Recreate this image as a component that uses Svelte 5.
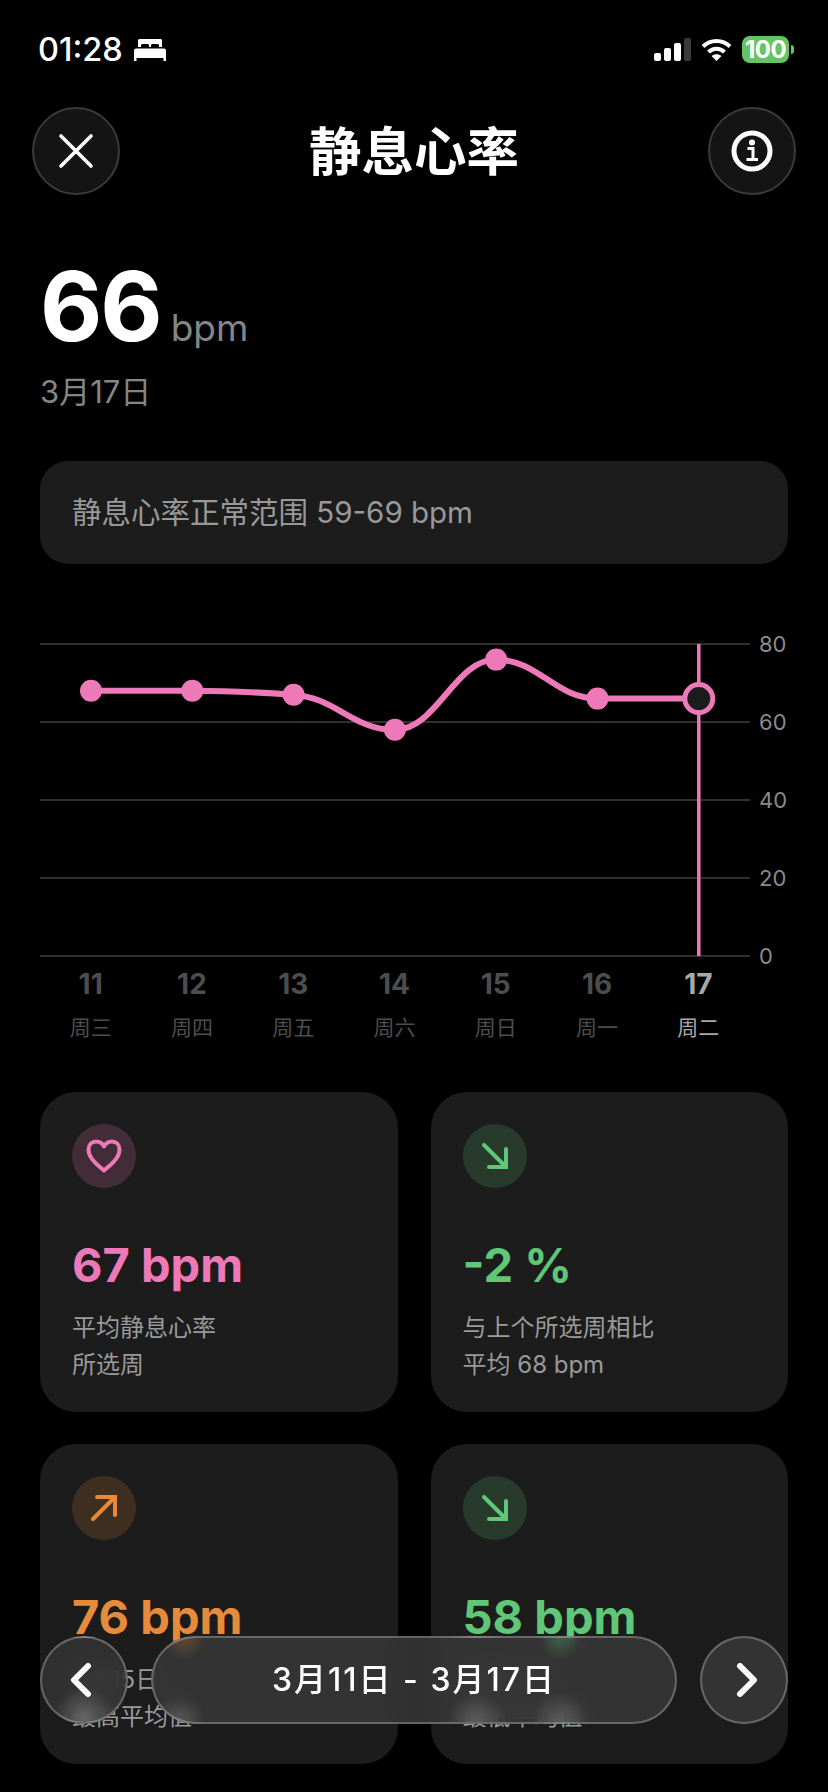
<script>
  const days = [
    { num: 11, week: '周三', bpm: 68 },
    { num: 12, week: '周四', bpm: 68 },
    { num: 13, week: '周五', bpm: 67 },
    { num: 14, week: '周六', bpm: 58 },
    { num: 15, week: '周日', bpm: 76 },
    { num: 16, week: '周一', bpm: 66 },
    { num: 17, week: '周二', bpm: 66 }
  ];
  const ticks = [80, 60, 40, 20, 0];

  const stepX = 101.3;
  const toY = (v) => 328 - v * 3.9;
  const points = days.map((d, i) => ({ x: 51 + i * stepX, y: toY(d.bpm) }));

  // monotone cubic so the line never overshoots the dots
  function smooth(pts) {
    const n = pts.length;
    const slopes = [];
    for (let i = 0; i < n - 1; i++) slopes.push((pts[i + 1].y - pts[i].y) / (pts[i + 1].x - pts[i].x));
    const tang = pts.map((_, i) => {
      if (i === 0) return slopes[0];
      if (i === n - 1) return slopes[n - 2];
      if (slopes[i - 1] * slopes[i] <= 0) return 0;
      return (2 * slopes[i - 1] * slopes[i]) / (slopes[i - 1] + slopes[i]);
    });
    let d = `M${pts[0].x} ${pts[0].y}`;
    for (let i = 0; i < n - 1; i++) {
      const h = (pts[i + 1].x - pts[i].x) / 2.4;
      d += ` C${pts[i].x + h} ${pts[i].y + tang[i] * h} ${pts[i + 1].x - h} ${pts[i + 1].y - tang[i + 1] * h} ${pts[i + 1].x} ${pts[i + 1].y}`;
    }
    return d;
  }
  const linePath = smooth(points);
  const last = points[points.length - 1];

  const cards = [
    { tone: 'pink', icon: 'heart', value: '67 bpm', lines: ['平均静息心率', '所选周'] },
    { tone: 'green', icon: 'down', value: '-2 %', lines: ['与上个所选周相比', '平均 68 bpm'] },
    { tone: 'orange', icon: 'up', value: '76 bpm', lines: ['3月15日', '最高平均值'] },
    { tone: 'green', icon: 'down', value: '58 bpm', lines: ['3月14日', '最低平均值'] }
  ];
</script>

<div class="screen">
  <div class="status">
    <div class="status-left">
      <span class="time">01:28</span>
      <svg width="32" height="22" viewBox="0 0 32 22" fill="#fff">
        <path d="M4 1.5C4 .7 4.7 0 5.5 0h21c.8 0 1.5.7 1.5 1.500V8h-3V6.500C25 5.700 24.300 5 23.500 5h-5c-.8 0-1.500.7-1.500 1.500V8h-2V6.500C15 5.700 14.300 5 13.500 5h-5C7.700 5 7 5.700 7 6.500V8H4z" />
        <path d="M2 9.500h28c1.100 0 2 .9 2 2V22h-2.500v-3h-27v3H0V11.500c0-1.100.9-2 2-2z" />
      </svg>
    </div>
    <div class="status-right">
      <svg width="37" height="23" viewBox="0 0 37 23" fill="#fff">
        <rect x="0" y="15" width="7" height="8" rx="2" />
        <rect x="10" y="10" width="7" height="13" rx="2" />
        <rect x="20" y="5" width="7" height="18" rx="2" />
        <rect x="30" y="0" width="7" height="23" rx="2" fill="#3a3a3a" />
      </svg>
      <svg width="31" height="23" viewBox="0 0 31 23" fill="none" stroke="#fff" stroke-width="4">
        <path d="M2 8.500C9.500 1 21.500 1 29 8.500" />
        <path d="M7.500 14C12 9.500 19 9.500 23.500 14" />
        <path d="M15.500 23L10.500 18C13.500 15.500 17.500 15.500 20.500 18z" fill="#fff" stroke="none" />
      </svg>
      <div class="battery">
        <span class="battery-body">100</span>
        <span class="battery-nub"></span>
      </div>
    </div>
  </div>

  <header class="top">
    <button class="round" aria-label="关闭">
      <svg width="36" height="36" viewBox="0 0 36 36" fill="none" stroke="#fff" stroke-width="3.600" stroke-linecap="round">
        <path d="M3 3L33 33M33 3L3 33" />
      </svg>
    </button>
    <h1>静息心率</h1>
    <button class="round" aria-label="信息">
      <svg width="42" height="42" viewBox="0 0 42 42" fill="none">
        <circle cx="21" cy="21" r="18" stroke="#fff" stroke-width="5" />
        <circle cx="21" cy="12.500" r="3" fill="#fff" />
        <path d="M16.500 18.500H22V29M15.500 29.500H27" stroke="#fff" stroke-width="3" />
      </svg>
    </button>
  </header>

  <section class="summary">
    <div class="reading"><span class="big">66</span><span class="unit">bpm</span></div>
    <div class="date">3月17日</div>
  </section>

  <div class="notice">静息心率正常范围 59-69 bpm</div>

  <section class="chart">
    <svg class="plot" width="788" height="340" viewBox="0 0 788 340">
      {#each ticks as t}
        <line x1="0" x2="710" y1={toY(t)} y2={toY(t)} stroke="#2f2f2f" stroke-width="2" />
        <text x="719" y={toY(t) + 8} class="tick">{t}</text>
      {/each}
      <line x1={last.x} x2={last.x} y1={toY(80)} y2={toY(0)} stroke="#ee79b8" stroke-width="3.500" />
      <path d={linePath} fill="none" stroke="#ee79b8" stroke-width="6" />
      {#each points.slice(0, -1) as p}
        <circle cx={p.x} cy={p.y} r="11" fill="#ee79b8" />
      {/each}
      <circle cx={last.x} cy={last.y} r="14" fill="#1c1c1e" stroke="#ee79b8" stroke-width="5" />
    </svg>
    <div class="days">
      {#each days as d, i}
        <div class="day" class:active={i === days.length - 1}>
          <span class="num">{d.num}</span>
          <span class="week">{d.week}</span>
        </div>
      {/each}
    </div>
  </section>

  <section class="cards">
    {#each cards as c}
      <article class="card {c.tone}">
        <div class="badge">
          {#if c.icon === 'heart'}
            <svg width="36" height="34" viewBox="0 0 36 34" fill="none" stroke="currentColor" stroke-width="4" stroke-linejoin="round">
              <path d="M18 31.500C10 25 2.500 18.500 2.500 10.500 2.500 5.500 6 2.500 10 2.500c3.500 0 6.500 1.800 8 5 1.500-3.200 4.500-5 8-5 4 0 7.500 3 7.500 8 0 8-7.500 14.500-15.500 21z" />
            </svg>
          {:else if c.icon === 'down'}
            <svg width="26" height="26" viewBox="0 0 26 26" fill="none" stroke="currentColor" stroke-width="4" stroke-linecap="round">
              <path d="M2 2L24 24M7 24H24V6" />
            </svg>
          {:else}
            <svg width="26" height="26" viewBox="0 0 26 26" fill="none" stroke="currentColor" stroke-width="4" stroke-linecap="round">
              <path d="M2 24L24 2M6 2H24V20" />
            </svg>
          {/if}
        </div>
        <div class="value">{c.value}</div>
        <p class="caption">{c.lines[0]}<br />{c.lines[1]}</p>
      </article>
    {/each}
  </section>

  <nav class="range">
    <button class="glass round-glass left" aria-label="上一周">
      <svg class="chev-left" width="24" height="34" viewBox="0 0 24 34" fill="none" stroke="#fff" stroke-width="6" stroke-linecap="round" stroke-linejoin="round">
        <path d="M19 3L5 17L19 31" />
      </svg>
    </button>
    <div class="glass pill">3月11日 - 3月17日</div>
    <button class="glass round-glass" aria-label="下一周">
      <svg class="chev-right" width="24" height="34" viewBox="0 0 24 34" fill="none" stroke="#fff" stroke-width="6" stroke-linecap="round" stroke-linejoin="round">
        <path d="M5 3L19 17L5 31" />
      </svg>
    </button>
  </nav>
</div>

<style>
  :global(body) {
    background: #000;
  }

  .screen {
    position: relative;
    height: 1792px;
    overflow: hidden;
    background: #000;
    color: #fff;
    font-family: Inter, "Noto Sans CJK SC", sans-serif;
  }

  .status {
    display: flex;
    justify-content: space-between;
    align-items: center;
    height: 27px;
    padding: 36px 34px 0 38px;
  }

  .status-left {
    display: flex;
    align-items: center;
    gap: 11px;
  }

  .time {
    font-size: 32.5px;
    font-weight: 500;
    line-height: 27px;
  }

  .status-right {
    display: flex;
    align-items: center;
    gap: 10px;
  }

  .battery {
    display: flex;
    align-items: center;
    gap: 2px;
  }

  .battery-body {
    width: 47px;
    height: 27px;
    border-radius: 8px;
    background: #65c466;
    font-size: 24px;
    font-weight: 700;
    line-height: 27px;
    text-align: center;
    letter-spacing: -0.5px;
  }

  .battery-nub {
    width: 3px;
    height: 9px;
    border-radius: 0 3px 3px 0;
    background: #65c466;
  }

  .top {
    display: flex;
    justify-content: space-between;
    align-items: center;
    margin-top: 43px;
    padding: 0 32px;
  }

  .round {
    display: flex;
    align-items: center;
    justify-content: center;
    width: 88px;
    height: 88px;
    padding: 0;
    border: 2px solid #3a3a3a;
    border-radius: 50%;
    background: #141414;
  }

  h1 {
    margin: 2px 0 0;
    font-size: 52.500px;
    font-weight: 700;
    line-height: 88px;
  }

  .summary {
    margin-top: 60px;
    padding: 0 40px;
  }

  .reading {
    display: flex;
    align-items: baseline;
    gap: 10px;
  }

  .big {
    font-size: 96px;
    font-weight: 700;
    line-height: 100px;
    letter-spacing: -2px;
  }

  .unit {
    font-size: 37px;
    color: #858585;
    line-height: 40px;
  }

  .date {
    margin-top: 17px;
    font-size: 31px;
    line-height: 38px;
    color: #858585;
  }

  .notice {
    margin: 50px 40px 0;
    padding: 0 32px;
    height: 103px;
    border-radius: 28px;
    background: #1c1c1c;
    color: #999;
    font-size: 29.500px;
    line-height: 103px;
  }

  .chart {
    margin-top: 64px;
    padding-left: 40px;
  }

  .plot {
    display: block;
  }

  .tick {
    fill: #8a8a8a;
    font-size: 22px;
  }

  .days {
    display: flex;
    width: 709px;
  }

  .day {
    flex: 1;
    display: flex;
    flex-direction: column;
    align-items: center;
    gap: 13px;
    color: #4d4d4d;
  }

  .day.active {
    color: #a8a8a8;
  }

  .num {
    font-size: 28px;
    font-weight: 700;
    line-height: 32px;
  }

  .week {
    font-size: 21px;
    line-height: 30px;
  }

  .cards {
    display: grid;
    grid-template-columns: 1fr 1fr;
    column-gap: 33px;
    row-gap: 32px;
    margin-top: 49px;
    padding: 0 40px;
  }

  .card {
    height: 320px;
    box-sizing: border-box;
    padding: 32px;
    border-radius: 36px;
    background: #1c1c1c;
  }

  .card.pink {
    color: #ee79b8;
  }

  .card.green {
    color: #5fc777;
  }

  .card.orange {
    color: #e58b3b;
  }

  .badge {
    display: flex;
    align-items: center;
    justify-content: center;
    width: 64px;
    height: 64px;
    border-radius: 50%;
    background: color-mix(in srgb, currentColor 18%, transparent);
  }

  .value {
    margin-top: 49px;
    font-size: 47px;
    font-weight: 700;
    line-height: 56px;
  }

  .caption {
    margin: 16px 0 0;
    color: #9a9a9a;
    font-size: 24px;
    line-height: 37px;
  }

  .range {
    position: absolute;
    left: 40px;
    right: 40px;
    bottom: 68px;
    display: flex;
    justify-content: space-between;
  }

  .glass {
    box-sizing: border-box;
    height: 88px;
    border: 2px solid rgba(255, 255, 255, 0.26);
    color: #fff;
    -webkit-backdrop-filter: blur(12px);
    backdrop-filter: blur(12px);
    background: rgba(55, 55, 55, 0.85);
  }

  .round-glass {
    display: flex;
    align-items: center;
    justify-content: center;
    width: 88px;
    padding: 0;
    border-radius: 50%;
  }

  .round-glass.left {
    background:
      radial-gradient(circle at 50% 95%, rgba(130, 130, 130, 0.6), transparent 34%),
      rgba(55, 55, 55, 0.75);
  }

  .chev-left {
    margin-right: 7px;
  }

  .chev-right {
    margin-left: 6px;
  }

  .pill {
    width: 526px;
    border-radius: 44px;
    font-size: 32px;
    font-weight: 500;
    line-height: 84px;
    text-align: center;
    letter-spacing: 2px;
    background:
      radial-gradient(circle 26px at 5% 100%, rgba(130, 130, 130, 0.45), transparent),
      radial-gradient(circle 30px at 62% 100%, rgba(130, 130, 130, 0.5), transparent),
      radial-gradient(circle 30px at 78% 100%, rgba(130, 130, 130, 0.5), transparent),
      radial-gradient(circle 22px at 78% 0, rgba(95, 199, 119, 0.3), transparent),
      radial-gradient(circle 22px at 6% 0, rgba(229, 139, 59, 0.25), transparent),
      rgba(55, 55, 55, 0.88);
  }
</style>
